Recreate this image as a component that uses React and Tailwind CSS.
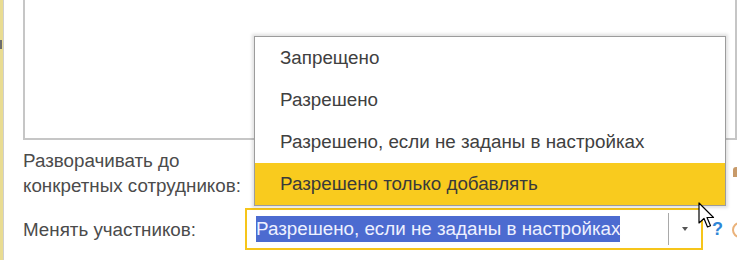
import React from "react";

export default function App() {
  const items = [
    "Запрещено",
    "Разрешено",
    "Разрешено, если не заданы в настройках",
    "Разрешено только добавлять",
  ];
  return (
    <div
      className="relative w-[737px] h-[260px] overflow-hidden bg-white flex"
      style={{ fontFamily: '"Liberation Sans", Arial, sans-serif' }}
    >
      {/* left strip */}
      <div className="w-[3px] h-full bg-[#e9dc92] relative">
        <div className="absolute left-0 top-[40px] w-[2px] h-[9px] bg-[#6d6d6d]" />
      </div>
      <div className="w-[1px] h-full bg-[#cfcfcf]" />

      <div className="flex-1 flex flex-col pl-[19px]">
        {/* textarea */}
        <div className="h-[140px] border-l-2 border-b-2 border-r-2 border-[#c6c6c6] bg-white" />

        {/* label row 1 */}
        <div className="mt-[8px] text-[18.8px] leading-[25px] text-[#4b4b4b]">
          <div>Разворачивать до</div>
          <div>конкретных сотрудников:</div>
        </div>

        {/* row 2 */}
        <div className="mt-[10px] flex items-center">
          <div className="w-[222px] text-[18.8px] text-[#4b4b4b] pt-[2px]">Менять участников:</div>
          <div className="w-[458px] h-[42px] border-2 border-[#f6c51a] flex items-center">
            <div className="flex-1 pl-[9px] whitespace-nowrap overflow-hidden">
              <span className="bg-[#4c6bd0] text-[#eef1ff] text-[18.8px] leading-[26px] inline-block">
                Разрешено, если не заданы в настройках
              </span>
            </div>
            <div className="w-[1px] h-[32px] bg-[#a9a9a9]" />
            <div className="w-[32px] flex justify-center">
              <div className="w-0 h-0 border-l-[3px] border-r-[3px] border-t-[4px] border-l-transparent border-r-transparent border-t-[#555]" />
            </div>
          </div>
          <div className="ml-[9px] text-[18px] font-bold text-[#2f86d6] leading-none">?</div>
        </div>
      </div>

      {/* right partial elements */}
      <div className="absolute left-[732px] top-[222px] w-[16px] h-[16px] rounded-full border-2 border-[#eab27a]" />
      <div className="absolute left-[733px] top-[167px] w-[6px] h-[10px] bg-[#c79a6a] rounded-t-full" />

      {/* popup */}
      <div className="absolute left-[254px] top-[36px] w-[472px] border border-[#9c9c9c] bg-white shadow-[0_0_3px_2px_rgba(0,0,0,0.12)]">
        {items.map((t, i) => (
          <div
            key={i}
            className={
              "h-[42px] flex items-center pl-[25px] text-[18.8px] " +
              (i === 3 ? "bg-[#f9cb1e] text-[#3a3a3a]" : "text-[#404040]")
            }
          >
            {t}
          </div>
        ))}
      </div>

      {/* cursor */}
      <svg
        className="absolute left-[698px] top-[202px]"
        width="18"
        height="28"
        viewBox="0 0 18 28"
      >
        <path
          d="M1 1 L1 21 L6 16.5 L9.5 25 L12.5 23.8 L9 15.5 L15.5 15.5 Z"
          fill="#fff"
          stroke="#000"
          strokeWidth="1.2"
          strokeLinejoin="round"
        />
      </svg>
    </div>
  );
}
